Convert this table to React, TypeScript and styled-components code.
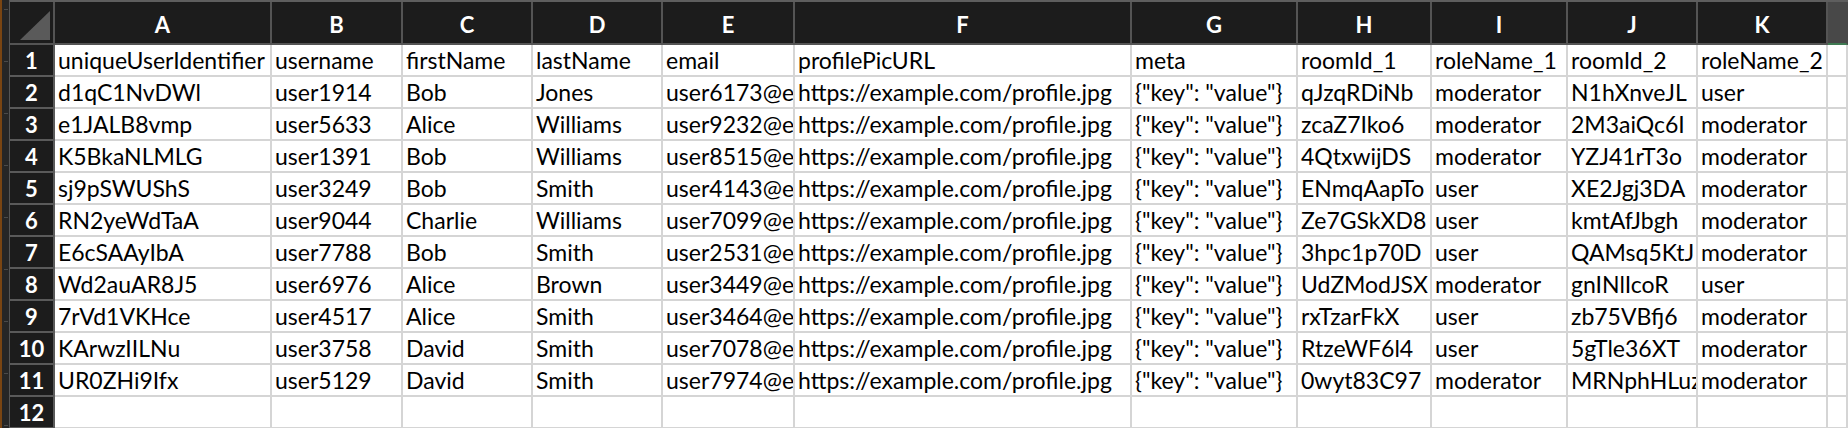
import React from "react";
import styled, { createGlobalStyle } from "styled-components";

const GlobalStyle = createGlobalStyle`
  html, body {
    margin: 0;
    padding: 0;
    background: #ffffff;
    overflow: hidden;
  }
  body {
    font-family: Lato, "Liberation Sans", sans-serif;
  }
`;

const Window = styled.div`
  display: flex;
  width: 1848px;
  height: 428px;
  overflow: hidden;
`;

const Edge = styled.div`
  flex: 0 0 9px;
  height: 100%;
  box-sizing: border-box;
  border-left: 2px solid #7a4512;
  background: repeating-linear-gradient(
      to bottom,
      transparent 0 9px,
      #4a4a4a 9px 10px,
      transparent 10px 52px
    )
    no-repeat 2px 0 / 4px 100%,
    #262626;
`;

/* tracks include the 2px right border of each cell */
const Sheet = styled.div`
  flex: 1;
  display: grid;
  grid-template-columns: 45px 217px 131px 130px 130px 132px 337px 166px 134px 136px 130px 130px 1fr;
  grid-template-rows: 43px;
  grid-auto-rows: 32px;
  border-top: 2px solid #5e5e5e;
  border-left: 1px solid #555555;
  align-content: start;
`;

const Corner = styled.div`
  position: relative;
  background: #1c1c1c;
  border-right: 2px solid #545454;
  border-bottom: 2px solid #545454;
`;

const Triangle = styled.div`
  position: absolute;
  right: 3px;
  bottom: 3px;
  width: 30px;
  height: 29px;
  background: #5a5a5a;
  clip-path: polygon(100% 0, 100% 100%, 0 100%);
`;

const ColHead = styled.div<{ $spare?: boolean }>`
  display: flex;
  align-items: center;
  justify-content: center;
  padding-top: 5px;
  background: ${(p) => (p.$spare ? "#484848" : "#1c1c1c")};
  color: #ffffff;
  font-size: 22px;
  font-weight: 700;
  line-height: 1;
  border-right: 2px solid ${(p) => (p.$spare ? "#484848" : "#545454")};
  border-bottom: 2px solid ${(p) => (p.$spare ? "#3f7a52" : "#545454")};
`;

const RowHead = styled.div`
  display: flex;
  align-items: flex-end;
  justify-content: center;
  padding-bottom: 3px;
  background: #1c1c1c;
  color: #ffffff;
  font-size: 22px;
  font-weight: 700;
  line-height: 1;
  border-right: 2px solid #5a5a5a;
  border-bottom: 2px solid #5a5a5a;
`;

const Cell = styled.div`
  display: flex;
  align-items: flex-end;
  padding: 0 0 3px 3px;
  overflow: hidden;
  white-space: nowrap;
  color: #000000;
  font-size: 23px;
  line-height: 1;
  background: #ffffff;
  border-right: 2px solid #d5d5d5;
  border-bottom: 2px solid #d5d5d5;
`;

const letters = ["A", "B", "C", "D", "E", "F", "G", "H", "I", "J", "K"];

const meta = '{"key": "value"}';
const pic = "https://example.com/profile.jpg";

const rows: string[][] = [
  ["uniqueUserIdentifier", "username", "firstName", "lastName", "email", "profilePicURL", "meta", "roomId_1", "roleName_1", "roomId_2", "roleName_2"],
  ["d1qC1NvDWl", "user1914", "Bob", "Jones", "user6173@example.com", pic, meta, "qJzqRDiNb", "moderator", "N1hXnveJL", "user"],
  ["e1JALB8vmp", "user5633", "Alice", "Williams", "user9232@example.com", pic, meta, "zcaZ7Iko6", "moderator", "2M3aiQc6I", "moderator"],
  ["K5BkaNLMLG", "user1391", "Bob", "Williams", "user8515@example.com", pic, meta, "4QtxwijDS", "moderator", "YZJ41rT3o", "moderator"],
  ["sj9pSWUShS", "user3249", "Bob", "Smith", "user4143@example.com", pic, meta, "ENmqAapTo", "user", "XE2Jgj3DA", "moderator"],
  ["RN2yeWdTaA", "user9044", "Charlie", "Williams", "user7099@example.com", pic, meta, "Ze7GSkXD8", "user", "kmtAfJbgh", "moderator"],
  ["E6cSAAyIbA", "user7788", "Bob", "Smith", "user2531@example.com", pic, meta, "3hpc1p70D", "user", "QAMsq5KtJ", "moderator"],
  ["Wd2auAR8J5", "user6976", "Alice", "Brown", "user3449@example.com", pic, meta, "UdZModJSX", "moderator", "gnINlIcoR", "user"],
  ["7rVd1VKHce", "user4517", "Alice", "Smith", "user3464@example.com", pic, meta, "rxTzarFkX", "user", "zb75VBfj6", "moderator"],
  ["KArwzIILNu", "user3758", "David", "Smith", "user7078@example.com", pic, meta, "RtzeWF6l4", "user", "5gTle36XT", "moderator"],
  ["UR0ZHi9Ifx", "user5129", "David", "Smith", "user7974@example.com", pic, meta, "0wyt83C97", "moderator", "MRNphHLuz", "moderator"],
  ["", "", "", "", "", "", "", "", "", "", ""],
];

export default function App() {
  return (
    <>
      <GlobalStyle />
      <Window>
        <Edge />
        <Sheet>
          <Corner>
            <Triangle />
          </Corner>
          {letters.map((l) => (
            <ColHead key={l}>{l}</ColHead>
          ))}
          <ColHead $spare />
          {rows.map((row, r) => (
            <React.Fragment key={r}>
              <RowHead>{r + 1}</RowHead>
              {row.map((v, c) => (
                <Cell key={c}>{v}</Cell>
              ))}
              <Cell />
            </React.Fragment>
          ))}
        </Sheet>
      </Window>
    </>
  );
}
